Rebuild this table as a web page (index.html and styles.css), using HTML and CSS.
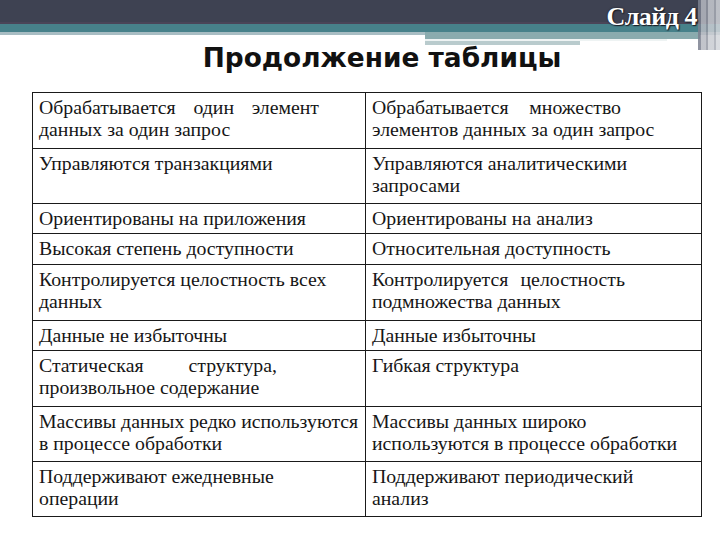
FILE: index.html
```html
<!DOCTYPE html>
<html lang="ru">
<head>
<meta charset="utf-8">
<title>Слайд 4</title>
<link rel="stylesheet" href="styles.css">
</head>
<body>
<div class="header">
  <div class="bar-dark"></div>
  <div class="bar-line"></div>
  <div class="bar-teal"></div>
  <div class="bar-light"></div>
  <div class="deco-a"></div>
  <div class="deco-line"></div>
  <div class="deco-b"></div>
  <div class="vstripes"></div>
  <div class="slide-no">Слайд 4</div>
</div>
<h1 class="title">Продолжение таблицы</h1>
<table class="grid">
  <colgroup><col class="c-left"><col class="c-right"></colgroup>
  <tr class="tall-x">
    <td><span class="spread w280">Обрабатывается один элемент</span>данных за один запрос</td>
    <td><span class="spread w249">Обрабатывается множество</span>элементов данных за один запрос</td>
  </tr>
  <tr class="tall">
    <td>Управляются транзакциями</td>
    <td>Управляются аналитическими<br>запросами</td>
  </tr>
  <tr class="short">
    <td>Ориентированы на приложения</td>
    <td>Ориентированы на анализ</td>
  </tr>
  <tr class="short-x">
    <td>Высокая степень доступности</td>
    <td>Относительная доступность</td>
  </tr>
  <tr class="tall-x">
    <td>Контролируется целостность всех<br>данных</td>
    <td><span class="spread w253">Контролируется целостность</span>подмножества данных</td>
  </tr>
  <tr class="short">
    <td>Данные не избыточны</td>
    <td>Данные избыточны</td>
  </tr>
  <tr class="tall-x">
    <td><span class="spread w238">Статическая структура,</span>произвольное содержание</td>
    <td>Гибкая структура</td>
  </tr>
  <tr class="tall">
    <td><span class="nowrap">Массивы данных редко используются</span><br>в процессе обработки</td>
    <td>Массивы данных широко<br><span class="nowrap">используются в процессе обработки</span></td>
  </tr>
  <tr class="tall">
    <td>Поддерживают ежедневные<br>операции</td>
    <td>Поддерживают периодический<br>анализ</td>
  </tr>
</table>
</body>
</html>
```
FILE: styles.css
```css
html, body {
  margin: 0;
  padding: 0;
  background: #ffffff;
}

.header {
  position: relative;
  height: 35px;
}

.bar-dark { height: 22px; background: #3e4252; }
.bar-line { height: 2px; background: #4a4558; }
.bar-teal { height: 8px; background: #47818a; }
.bar-light { height: 3px; background: #a8bdc3; }

.deco-a {
  position: absolute;
  left: 425px; top: 32px;
  width: 275px; height: 7px;
  background: #8aabae;
}
.deco-line {
  position: absolute;
  left: 425px; top: 39px;
  width: 242px; height: 2px;
  background: #eef3f3;
}
.deco-b {
  position: absolute;
  left: 425px; top: 41px;
  width: 155px; height: 4px;
  background: #b9cbcd;
}

.vstripes {
  position: absolute;
  right: 0; top: 0;
  width: 22px; height: 50px;
  background: linear-gradient(90deg,
    #7c8190 0, #7c8190 3px,
    #b7bac2 3px, #b7bac2 8px,
    #9599a4 8px, #9599a4 10px,
    #c9ccd2 10px, #c9ccd2 16px,
    #a9adb6 16px, #a9adb6 18px,
    #d3d6db 18px);
  opacity: 0.85;
}

.slide-no {
  position: absolute;
  right: 23px; top: 1px;
  font-family: "Liberation Serif", serif;
  font-weight: bold;
  font-size: 26px;
  line-height: 32px;
  letter-spacing: -0.5px;
  color: #ffffff;
  text-shadow: 1px 1px 1px #1a1c24, 0 0 2px #1a1c24;
}

.title {
  margin: 8px 0 19px 0;
  padding-left: 44px;
  text-align: center;
  font-family: "DejaVu Sans", sans-serif;
  font-weight: bold;
  font-size: 26.4px;
  line-height: 30px;
  color: #111111;
}

.grid {
  margin-left: 32px;
  width: 669px;
  border-collapse: collapse;
  table-layout: fixed;
  font-family: "Liberation Serif", serif;
  font-size: 19.8px;
  line-height: 22px;
  color: #161616;
}

.c-left { width: 333px; }
.c-right { width: 336px; }

.grid td {
  border: 1px solid #1a1a1a;
  vertical-align: top;
  padding: 3px 6px 0 6px;
}

.tall { height: 55px; }
.tall-x { height: 56px; }
.short { height: 30px; }
.short-x { height: 31px; }

.nowrap { white-space: nowrap; }

.spread {
  display: block;
  text-align: justify;
  text-align-last: justify;
}
.w280 { width: 280px; }
.w249 { width: 249px; }
.w253 { width: 253px; }
.w238 { width: 238px; }
```
